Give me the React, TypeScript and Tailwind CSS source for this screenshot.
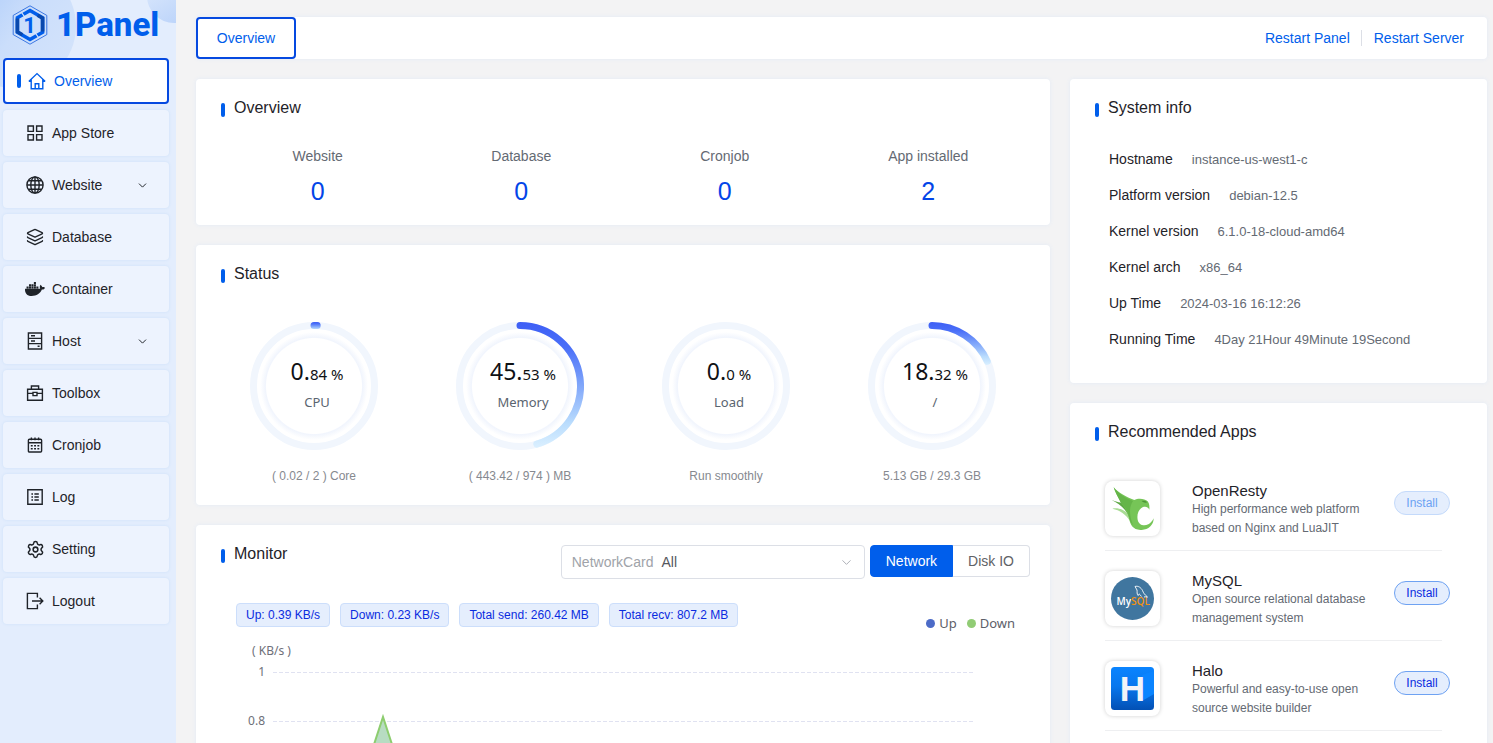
import React, { useState } from 'react';
import { ChevronDown, Layers, Settings } from 'lucide-react';
import { FaDocker } from 'react-icons/fa6';
import { clsx } from 'clsx';

interface MenuItem {
  label: string;
  icon: React.ReactNode;
  expandable?: boolean;
}

interface Gauge {
  name: string;
  whole: string;
  fraction: string;
  percent: number;
  caption: string;
}

interface RecommendedApp {
  name: string;
  description: string;
  logo: React.ReactNode;
  disabled?: boolean;
}

const LineIcon: React.FC<{ children: React.ReactNode }> = ({ children }) => (
  <svg width="18" height="18" viewBox="0 0 18 18" fill="none" stroke="currentColor" strokeWidth="1.4">
    {children}
  </svg>
);

const MENU: MenuItem[] = [
  {
    label: 'Overview',
    icon: (
      <LineIcon>
        <path d="M1 9.2 9 1.6l8 7.6M3.2 7.6v9.2h11.6V7.6M7.2 16.8v-5h3.6v5" />
        <path d="M.8 9.4h2.4M14.8 9.4h2.4" />
      </LineIcon>
    ),
  },
  {
    label: 'App Store',
    icon: (
      <LineIcon>
        <path d="M2 2h5.4v5.4H2zM10.6 2H16v5.4h-5.4zM2 10.6h5.4V16H2zM10.6 10.6H16V16h-5.4z" />
      </LineIcon>
    ),
  },
  {
    label: 'Website',
    expandable: true,
    icon: (
      <LineIcon>
        <circle cx="9" cy="9" r="8.1" />
        <ellipse cx="9" cy="9" rx="4.2" ry="8.1" />
        <path d="M9 1v16M1 9h16M2.4 4.8h13.2M2.4 13.2h13.2" />
      </LineIcon>
    ),
  },
  { label: 'Database', icon: <Layers size={18} strokeWidth={1.8} /> },
  { label: 'Container', icon: <FaDocker size={20} className="-mx-px" /> },
  {
    label: 'Host',
    expandable: true,
    icon: (
      <LineIcon>
        <path d="M2.4 1h13.2v16H2.4zM2.4 6.4h13.2M2.4 11.6h13.2M5 3.8h4M5 9h4M11.6 14.2h2" />
      </LineIcon>
    ),
  },
  {
    label: 'Toolbox',
    icon: (
      <LineIcon>
        <path d="M1.6 5.2h14.8v11H1.6zM5.4 5V2h7.2v3M1.6 9.4h5M11.4 9.4h5M7 8.4h4v3.2H7z" />
      </LineIcon>
    ),
  },
  {
    label: 'Cronjob',
    icon: (
      <LineIcon>
        <rect x="2.4" y="3.2" width="13.2" height="12.8" rx="1" />
        <path d="M2.4 6.8h13.2M5.4 1.6v2.6M9 1.6v2.6M12.6 1.6v2.6" />
        <path d="M4.8 9.8h8.8M4.8 12.8h8.8" strokeDasharray="1.9 1.4" />
      </LineIcon>
    ),
  },
  {
    label: 'Log',
    icon: (
      <LineIcon>
        <path d="M1.8 1.8h14.4v14.4H1.8zM5.4 6H7M5.4 9H7M5.4 12H7M8.4 6h4.4M8.4 9h4.4M8.4 12h4.4" />
      </LineIcon>
    ),
  },
  { label: 'Setting', icon: <Settings size={19} strokeWidth={1.9} className="-mr-px" /> },
  {
    label: 'Logout',
    icon: (
      <LineIcon>
        <path d="M11.4 5.4V1.4H1.4v15.2h10v-4M6 9h10.6M13.6 5.8 16.8 9l-3.2 3.2" />
      </LineIcon>
    ),
  },
];

const COUNTS = [
  { label: 'Website', value: 0 },
  { label: 'Database', value: 0 },
  { label: 'Cronjob', value: 0 },
  { label: 'App installed', value: 2 },
];

const GAUGES: Gauge[] = [
  { name: 'CPU', whole: '0', fraction: '84', percent: 0.84, caption: '( 0.02 / 2 ) Core' },
  { name: 'Memory', whole: '45', fraction: '53', percent: 45.53, caption: '( 443.42 / 974 ) MB' },
  { name: 'Load', whole: '0', fraction: '0', percent: 0, caption: 'Run smoothly' },
  { name: '/', whole: '18', fraction: '32', percent: 18.32, caption: '5.13 GB / 29.3 GB' },
];

const SYSTEM_INFO = [
  ['Hostname', 'instance-us-west1-c'],
  ['Platform version', 'debian-12.5'],
  ['Kernel version', '6.1.0-18-cloud-amd64'],
  ['Kernel arch', 'x86_64'],
  ['Up Time', '2024-03-16 16:12:26'],
  ['Running Time', '4Day 21Hour 49Minute 19Second'],
];

const TRAFFIC = ['Up: 0.39 KB/s', 'Down: 0.23 KB/s', 'Total send: 260.42 MB', 'Total recv: 807.2 MB'];

const AXIS = ['1', '0.8'];

const OpenRestyLogo = () => (
  <svg width="43" height="43" viewBox="64 50 129 129">
    <path d="M68 115c14-4 34 2 46 14l6 22c-10-18-30-32-52-36z" fill="#a9dc95" />
    <path d="M66 89c14 6 28 8 40 10l-12-14 26 10 10 60c-8-4-12-10-14-20-10-22-30-36-50-46z" fill="#5da845" />
    <path
      d="M72 51c16 18 36 28 62 38 12-6 32-4 40 4 4 5 6 13 5 25-4-9-11-10-19-8-13 6-19 22-16 38 4 18 20 20 32 14 7-4 12-10 16-18 0 22-18 36-40 35-22-1-30-14-35-38-4-20-13-30-24-45-8-16-17-32-21-45z"
      fill="#76c557"
    />
    <path d="M72 51c16 20 34 32 58 41-12 18-12 42 0 72-7-7-10-15-13-28-4-18-13-26-24-40-8-16-17-32-21-45z" fill="#65b549" />
    <path d="M156 92c6-2 14 0 17 4-6 2-12 1-17-4z" fill="#4b9636" />
  </svg>
);

const MySqlLogo = () => (
  <svg width="43" height="43" viewBox="0 0 43 43">
    <circle cx="21.500" cy="21.500" r="21.500" fill="#40769f" />
    <text x="5.500" y="28" fontSize="10" fontWeight="600" fill="#fff" fontFamily="'Open Sans', sans-serif">
      My<tspan fill="#f29111">SQL</tspan>
    </text>
    <path
      d="M24 9.500c3-1 6 1 7.500 4 1 2.500 2 4 5 6.500-1.500-.4-2.500-.2-3.500 0M24 9.500l2 3.500c.4 2-.5 4 1.200 5.500l1-1.600c1 .8 1.600 1.600 2.200 2.600"
      fill="none"
      stroke="#fff"
      strokeWidth=".9"
    />
  </svg>
);

const HaloLogo = () => (
  <svg width="43" height="43" viewBox="0 0 43 43">
    <defs>
      <linearGradient id="halo" x1="0" y1="0" x2="0" y2="1">
        <stop offset="0" stopColor="#0a84ff" />
        <stop offset=".45" stopColor="#0877ee" />
        <stop offset="1" stopColor="#0350b4" />
      </linearGradient>
    </defs>
    <rect width="43" height="43" rx="3.500" fill="url(#halo)" />
    <path d="M31 8 43 4v23L31 34z" fill="#0a84ff" />
    <text x="21.500" y="34" textAnchor="middle" fontSize="35" fontWeight="700" fill="#f2f4f8" fontFamily="'Liberation Sans', sans-serif">
      H
    </text>
  </svg>
);

const APPS: RecommendedApp[] = [
  {
    name: 'OpenResty',
    description: 'High performance web platform based on Nginx and LuaJIT',
    logo: <OpenRestyLogo />,
    disabled: true,
  },
  { name: 'MySQL', description: 'Open source relational database management system', logo: <MySqlLogo /> },
  { name: 'Halo', description: 'Powerful and easy-to-use open source website builder', logo: <HaloLogo /> },
];

const BrandMark = () => (
  <svg width="36" height="40" viewBox="0 0 36 40" fill="none">
    <path d="M18 .8 34.800 10.400v19.200L18 39.200 1.200 29.600V10.400z" stroke="#2a6be0" strokeWidth=".9" />
    <path d="M18 5.500 30.600 12.800v14.400L18 34.500 5.400 27.200V12.800z" stroke="#005eeb" strokeWidth="3.600" />
    <path d="M5.400 13.600v13.200l5 3M30.600 26.400V13.200l-5-3" stroke="#0a49ad" strokeWidth="3.600" />
    <path d="m9.500 7.500 4 5.500M26.500 32.500l-4-5.500" stroke="#dbe8fc" strokeWidth="1.200" />
    <text x="17.500" y="28" textAnchor="middle" fontSize="22" fontWeight="700" fill="#005eeb" fontFamily="Roboto, sans-serif">
      1
    </text>
  </svg>
);

const Card: React.FC<{ title: string; className?: string; extra?: React.ReactNode; children: React.ReactNode }> = ({
  title,
  className,
  extra,
  children,
}) => (
  <section className={clsx('rounded bg-white shadow-[0_0_4px_#e3eaf6]', className)}>
    <div className="flex items-start justify-between pt-[18px] pr-5 pl-[25px]">
      <div className="flex h-5 items-end gap-[9px]">
        <span className="h-3.5 w-1 rounded-xs bg-[#005eeb]" />
        <h2 className="text-base leading-[18px] text-[#1f2329]">{title}</h2>
      </div>
      {extra}
    </div>
    {children}
  </section>
);

const RADIUS = 60.5;

const GaugeRing: React.FC<{ gauge: Gauge; index: number }> = ({ gauge, index }) => {
  const angle = (gauge.percent / 100) * Math.PI * 2;
  const endX = 64 + RADIUS * Math.sin(angle);
  const endY = 64 - RADIUS * Math.cos(angle);

  return (
    <div className="flex flex-col items-center">
      <div className="grid place-items-center">
        <svg width="128" height="128" viewBox="0 0 128 128" fill="none" className="col-start-1 row-start-1">
          <defs>
            <linearGradient
              id={`arc-${index}`}
              gradientUnits="userSpaceOnUse"
              x1="64"
              y1="0"
              x2="64"
              y2={Math.max(endY + 4, 9)}
            >
              <stop offset="0" stopColor="#3e5ff5" />
              <stop offset=".2" stopColor="#4a6ff8" />
              <stop offset=".5" stopColor="#80a6fa" />
              <stop offset=".8" stopColor="#b9dcfd" />
              <stop offset="1" stopColor="#dbf0ff" />
            </linearGradient>
            <radialGradient id={`glow-${index}`} gradientUnits="userSpaceOnUse" cx="64" cy="64" r="54">
              <stop offset=".88" stopColor="#fff" />
              <stop offset=".9" stopColor="#f1f5fd" />
              <stop offset="1" stopColor="#fff" />
            </radialGradient>
          </defs>
          <circle cx="64" cy="64" r="54" fill={`url(#glow-${index})`} />
          <circle cx="64" cy="64" r={RADIUS} stroke="#f1f6fd" strokeWidth="7" />
          {gauge.percent > 0 && (
            <path
              d={`M64 ${64 - RADIUS}A${RADIUS} ${RADIUS} 0 0 1 ${endX} ${endY}`}
              stroke={`url(#arc-${index})`}
              strokeWidth="7"
              strokeLinecap="round"
            />
          )}
        </svg>
        <div className="col-start-1 row-start-1 pl-1.5 text-center font-['Noto_Sans',sans-serif]">
          <p className="text-[15px] leading-7 text-[#0f1114]">
            <span className="text-[23px]">{gauge.whole}.</span>
            {gauge.fraction} %
          </p>
          <p className="text-[13px] leading-7 text-[#5a6470]">{gauge.name}</p>
        </div>
      </div>
      <p className="mt-4 text-xs leading-5 text-[#86898f]">{gauge.caption}</p>
    </div>
  );
};

const Sidebar: React.FC = () => {
  const [active, setActive] = useState('Overview');

  return (
    <aside className="relative w-44 shrink-0 overflow-hidden bg-[#e3edfd]">
      <svg className="absolute top-0 left-0" width="176" height="100" viewBox="0 0 176 100">
        <defs>
          <linearGradient id="blob" x1="0" y1="0" x2="1" y2=".7">
            <stop offset="0" stopColor="#9fc3f8" />
            <stop offset=".6" stopColor="#cbdefb" />
            <stop offset="1" stopColor="#d3e3fb" />
          </linearGradient>
          <linearGradient id="corner" x1="0" y1="0" x2=".6" y2="1">
            <stop offset="0" stopColor="#e3edfd" />
            <stop offset="1" stopColor="#bcd4fa" />
          </linearGradient>
        </defs>
        <circle cx="14" cy="26" r="62" fill="url(#blob)" />
        <circle cx="174" cy="-4" r="27" fill="url(#corner)" />
      </svg>
      <div className="relative">
        <a href="#" className="flex h-[58px] items-start gap-2 pt-[5px] pl-3">
          <BrandMark />
          <span className="font-['Roboto',sans-serif] text-[33px] leading-10 font-extrabold text-[#005eeb]">1Panel</span>
        </a>
        <nav className="flex flex-col gap-1.5 pr-[7px] pl-[3px]">
          {MENU.map((item) => {
            const isActive = item.label === active;
            return (
              <button
                key={item.label}
                type="button"
                onClick={() => setActive(item.label)}
                className={clsx(
                  'flex h-[46px] items-center rounded text-left text-sm',
                  isActive
                    ? 'border-2 border-[#0549e0] bg-white pr-[18px] pl-3 text-[#005eeb]'
                    : 'bg-[#edf3fe] pr-5 pl-[23px] text-[#1f2329] shadow-[0_0_3px_#cbdff8]'
                )}
              >
                {isActive && <span className="mr-[7px] h-3.5 w-1 rounded-xs bg-[#005eeb]" />}
                {item.icon}
                <span className="ml-2 flex-1">{item.label}</span>
                {item.expandable && <ChevronDown size={13} strokeWidth={1.8} />}
              </button>
            );
          })}
        </nav>
      </div>
    </aside>
  );
};

const MonitorChart: React.FC = () => (
  <div className="pr-[77px] pb-6 pl-10 font-['Noto_Sans',sans-serif] text-xs text-[#6e7079]">
    <p className="mt-3 pl-4 leading-4">( KB/s )</p>
    <div className="mt-[5px] flex gap-2">
      <div className="flex w-[29px] flex-col text-right">
        {AXIS.map((tick) => (
          <span key={tick} className="h-[49px] leading-4">
            {tick}
          </span>
        ))}
      </div>
      <svg className="mt-2 h-[246px] min-w-0 flex-1" viewBox="0 0 700 246" preserveAspectRatio="none" fill="none">
        {[0, 49, 98, 147, 196, 245].map((y) => (
          <path key={y} d={`M0 ${y + 0.5}H700`} stroke="#e0e2f1" strokeDasharray="4 2" vectorEffect="non-scaling-stroke" />
        ))}
        <path d="M44 246 110 45l66 201z" fill="#b7dcc2" />
        <path d="M44 246 110 45l66 201" stroke="#8dcd6f" strokeWidth="2" vectorEffect="non-scaling-stroke" />
      </svg>
    </div>
  </div>
);

const MonitorCard: React.FC = () => {
  const [tab, setTab] = useState('Network');

  return (
    <Card
      title="Monitor"
      extra={
        <div className="mt-0.5 flex items-start gap-[5px] text-sm">
          <div className="flex h-[34px] w-[304px] items-center rounded border border-[#dcdfe6] px-2.5">
            <label htmlFor="network-card" className="text-[#a0a3a9]">
              NetworkCard
            </label>
            <select id="network-card" className="ml-2 flex-1 appearance-none bg-transparent text-[#55585e] outline-none">
              <option>All</option>
            </select>
            <ChevronDown size={15} strokeWidth={1.5} className="text-[#a8abb2]" />
          </div>
          <div className="flex">
            {['Network', 'Disk IO'].map((name) => (
              <button
                key={name}
                type="button"
                onClick={() => setTab(name)}
                className={clsx(
                  'h-8 border px-[15px] first:rounded-l last:rounded-r last:border-l-0',
                  tab === name ? 'border-[#005eeb] bg-[#005eeb] text-white' : 'border-[#dcdfe6] bg-white text-[#606266]'
                )}
              >
                {name}
              </button>
            ))}
          </div>
        </div>
      }
    >
      <div className="mt-6 flex items-start justify-between pr-[35px] pl-10">
        <div className="flex gap-2.5">
          {TRAFFIC.map((text) => (
            <span
              key={text}
              className="flex h-6 items-center rounded border border-[#ccdefb] bg-[#e5eefd] px-[9px] text-xs text-[#0a2be0]"
            >
              {text}
            </span>
          ))}
        </div>
        <div className="mt-3 flex gap-2.5 font-['Noto_Sans',sans-serif] text-[13px] leading-4 text-[#5d6068]">
          <span className="flex items-center gap-1">
            <i className="size-[9px] rounded-full bg-[#4c6bc7]" />
            Up
          </span>
          <span className="flex items-center gap-1">
            <i className="size-[9px] rounded-full bg-[#91cc75]" />
            Down
          </span>
        </div>
      </div>
      <MonitorChart />
    </Card>
  );
};

export default function App() {
  return (
    <div className="flex h-screen overflow-hidden bg-[#f3f3f4] font-['Liberation_Sans',Arial,sans-serif]">
      <Sidebar />
      <main className="min-w-0 flex-1 pt-[17px] pr-1.5 pl-5">
        <header className="flex h-[42px] items-center justify-between rounded bg-white pr-[23px] text-sm text-[#005eeb] shadow-[0_0_4px_#e3eaf6]">
          <button type="button" className="h-full w-[100px] rounded border-2 border-[#0549e0]">
            Overview
          </button>
          <div className="flex items-center">
            <button type="button">Restart Panel</button>
            <span className="mr-3 ml-[11px] h-4 w-px bg-[#dcdfe6]" />
            <button type="button">Restart Server</button>
          </div>
        </header>

        <div className="mt-5 grid grid-cols-3 items-start gap-5">
          <div className="col-span-2 flex flex-col gap-5">
            <Card title="Overview" className="pb-[18px]">
              <div className="mt-[29px] grid grid-cols-4 px-5 text-center">
                {COUNTS.map((count) => (
                  <div key={count.label}>
                    <p className="text-sm leading-5 text-[#646a73]">{count.label}</p>
                    <p className="mt-[9px] text-[25px] leading-8 text-[#0345e8]">{count.value}</p>
                  </div>
                ))}
              </div>
            </Card>

            <Card title="Status" className="pb-[19px]">
              <div className="mt-[39px] grid grid-cols-4 px-[15px]">
                {GAUGES.map((gauge, i) => (
                  <GaugeRing key={gauge.name} gauge={gauge} index={i} />
                ))}
              </div>
            </Card>

            <MonitorCard />
          </div>

          <div className="flex flex-col gap-5">
            <Card title="System info" className="pb-[26px]">
              <dl className="mt-6 pl-[39px]">
                {SYSTEM_INFO.map(([label, value]) => (
                  <div key={label} className="flex h-9 items-baseline gap-[19px] leading-9">
                    <dt className="text-sm leading-9 text-[#1f2329]">{label}</dt>
                    <dd className="text-[13px] leading-9 text-[#646a73]">{value}</dd>
                  </div>
                ))}
              </dl>
            </Card>

            <Card title="Recommended Apps" className="pb-5">
              <ul className="mt-5 pr-[45px] pl-[35px]">
                {APPS.map((app) => (
                  <li key={app.name} className="flex items-start border-b border-[#eeeff1] pt-5 pb-3">
                    <div className="flex size-[55px] shrink-0 items-center justify-center rounded-lg bg-white shadow-[0_0_4px_#d0d0d0]">
                      {app.logo}
                    </div>
                    <div className="ml-8 min-w-0 flex-1">
                      <h3 className="text-[15px] leading-[19px] text-[#1f2329]">{app.name}</h3>
                      <p className="text-xs leading-[19px] text-[#646a73]">{app.description}</p>
                    </div>
                    <button
                      type="button"
                      disabled={app.disabled}
                      className={clsx(
                        'mt-2.5 -mr-2 ml-5 h-6 w-14 rounded-full border bg-[#e5eefd] text-xs',
                        app.disabled ? 'border-[#c4dafb] text-[#6ba2f3]' : 'border-[#6ea2f2] text-[#0a2be0]'
                      )}
                    >
                      Install
                    </button>
                  </li>
                ))}
              </ul>
            </Card>
          </div>
        </div>
      </main>
    </div>
  );
}
